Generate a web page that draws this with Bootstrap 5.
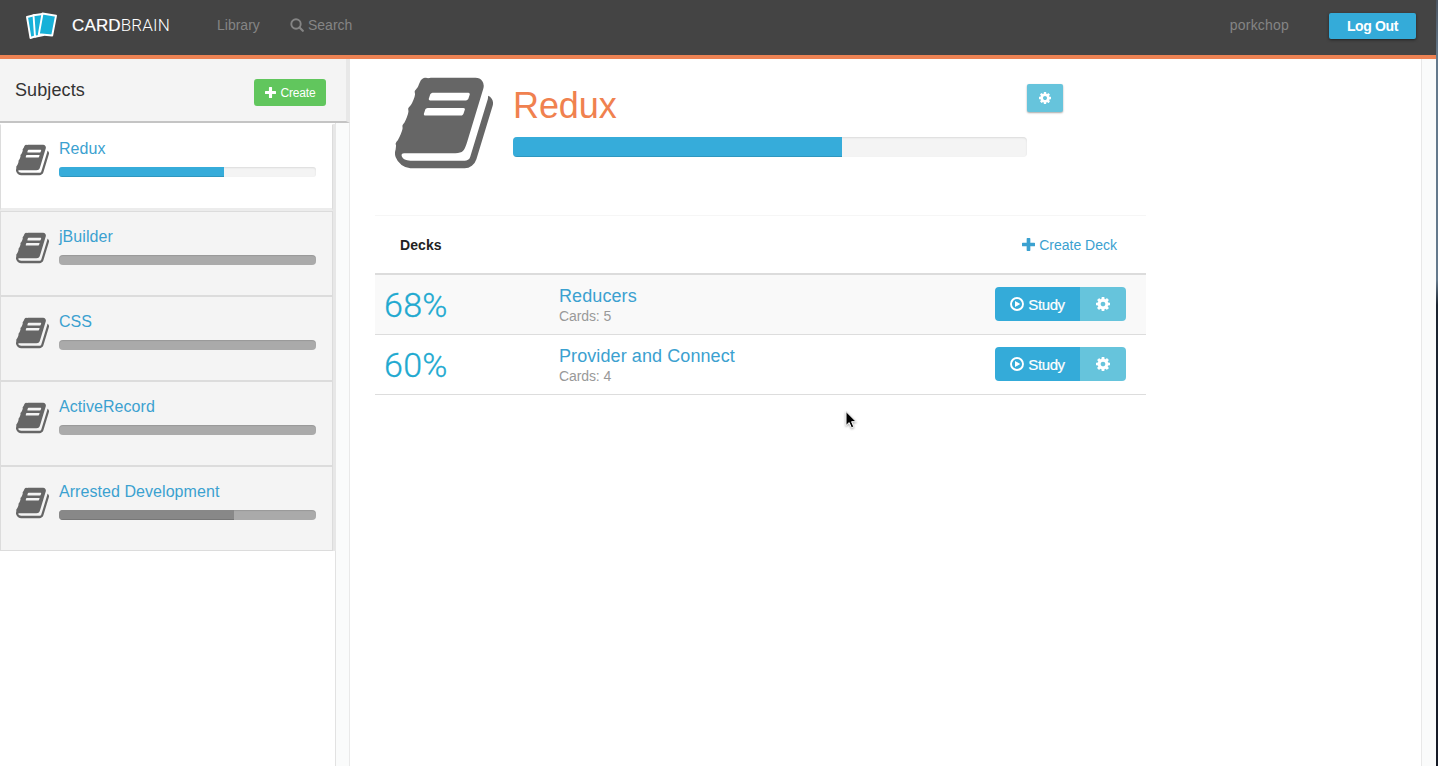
<!DOCTYPE html>
<html lang="en">
<head>
<meta charset="utf-8">
<title>CardBrain</title>
<link href="https://cdn.jsdelivr.net/npm/bootstrap@5.3.0/dist/css/bootstrap.min.css" rel="stylesheet">
<style>
  body { font-family: "Liberation Sans", Arial, sans-serif; font-size: 14px; line-height: 20px; color: #333; height: 100vh; overflow: hidden; background: #fff; }
  a { text-decoration: none; color: #3ba1d0; }
  svg { display: block; fill: currentColor; flex: none; }
  .desk-edge { width: 2px; background: linear-gradient(#4b5561 0, #64798c 60px, #64798c 280px, #1b2430 305px, #151a26 100%); }
  .topbar { height: 59px; background: #444; border-bottom: 4px solid #ed8253; padding: 0 20px 4px 25px; }
  .topbar a { color: #858585; }
  .topbar > a:not(.btn):not(.brand-name) { padding-bottom: 2px; }
  .brand-name { font-size: 17px; color: #fff !important; margin-left: 14px; width: 97px; white-space: nowrap; letter-spacing: .15px; -webkit-text-stroke: .2px #fff; }
  .brand-thin { font-family: Roboto, sans-serif; font-weight: 300; -webkit-text-stroke: 0; }
  .lnk-library { margin-left: 48px; width: 43px; }
  .lnk-search { margin-left: 30px; gap: 4px; }
  .btn-logout { width: 87px; height: 26px; margin-left: 40px; background: #34abd9; color: #fff !important; font-size: 14px; font-weight: 700; letter-spacing: -.35px; padding: 0; line-height: 27px; border: 0; border-radius: 2px; box-shadow: 0 1px 3px rgba(0,0,0,.5); }
  .sidebar { width: 350px; }
  .side-head { height: 64px; background: #f4f4f4; border-right: 4px solid #e8e8e8; border-bottom: 2px solid #c4c4c4; padding: 0 20px 0 15px; font-size: 18px; letter-spacing: .1px; }
  .btn-create { width: 72px; height: 27px; background: #61c65d; color: #fff !important; font-size: 12px; padding: 0 0 0 1px; border: 0; border-radius: 3px; gap: 4px; letter-spacing: -.15px; margin-top: 4px; }
  .btn-create span { padding-top: 2px; }
  .side-list { width: 336px; border-right: 1px solid #e2e2e2; padding-top: 1px; }
  .subject { height: 85px; width: 333px; border: 1px solid #dcdcdc; background: #f4f4f4; box-shadow: 3px 0 0 #e7e7e7; padding: 15px 16px 0 15px; color: #666; gap: 10px; }
  .subject.active { height: 87px; background: #fff; border-top-color: #fff; border-bottom: 3px solid #ececec; padding-top: 14px; }
  .subject a { font-size: 16px; letter-spacing: .06px; }
  .subject svg { margin-top: 3px; }
  .progress { background: #f4f4f4; height: 10px; border-radius: 3px; box-shadow: inset 0 1px 2px rgba(0,0,0,.1); }
  .progress-bar { background: #36acda; box-shadow: inset 0 -1px 0 rgba(0,0,0,.12); }
  .subject .progress { margin-top: 8px; }
  .subject:not(.active) .progress { background: #aaa; box-shadow: inset 0 1px 1px rgba(0,0,0,.1); border-radius: 4px; }
  .subject:not(.active) .progress-bar { background: #888; }
  .gutter { background: #fafbfb; }
  .g-left { border-right: 1px solid #e9e9e9; }
  .g-right { width: 15px; border-left: 1px solid #e8e8e8; }
  .main-pane { padding-left: 25px; }
  .deck-area { width: 771px; }
  .subject-head { height: 156px; padding: 11px 0 0 20px; color: #666; }
  .subject-head h1 { font-size: 36px; line-height: 40px; color: #f0814f; margin: 16px 0 11px; font-weight: 400; letter-spacing: -.1px; }
  .title-col { width: 514px; margin-left: 20px; }
  .title-col .progress { height: 20px; border-radius: 4px; }
  .btn-gear { background: #66c4dc; color: #fff; width: 36px; height: 28px; padding: 0 1px 0 0; border: 0; border-radius: 2px; margin-top: 14px; box-shadow: 0 1px 2px rgba(0,0,0,.35); }
  .deck-head { height: 60px; border-top: 1px solid #f6f6f6; border-bottom: 2px solid #dcdcdc; padding: 0 29px 0 25px; }
  .deck-head b { color: #222; letter-spacing: .1px; }
  .deck-row { height: 60px; border-bottom: 1px solid #ddd; padding: 0 20px 0 10px; }
  .deck-row.odd { background: #f9f9f9; }
  .pct { width: 174px; font: 300 34px/40px Roboto, sans-serif; color: #21a9d0; text-indent: -1px; letter-spacing: .3px; -webkit-text-stroke: .3px #21a9d0; }
  .deck-text { padding-top: 2px; }
  .deck-title { font-size: 18px; line-height: 20px; letter-spacing: .09px; }
  .count { color: #999; letter-spacing: -.1px; }
  .btn-group { margin-bottom: 1px; }
  .btn-study { width: 85px; height: 34px; background: #34abd9; color: #fff; font-size: 15px; padding: 0; border: 0; border-radius: 4px; gap: 4px; letter-spacing: -.4px; }
  .btn-study span { padding-top: 2px; -webkit-text-stroke: .2px #fff; }
  .btn-group > .btn-opts { width: 46px; height: 34px; background: #66c4dc; color: #fff; padding: 0; border: 0; border-radius: 4px; margin-left: 0 !important; }
  .pointer { position: absolute; left: 845px; top: 410px; filter: drop-shadow(0 1px 1px rgba(0,0,0,.35)); }
</style>
<script src="https://cdn.jsdelivr.net/npm/bootstrap@5.3.0/dist/js/bootstrap.bundle.min.js"></script>
</head>
<body class="d-flex">
<svg class="d-none">
  <symbol id="book" viewBox="0 0 1664 1792"><path d="M1639 478q40 57 18 129l-275 906q-19 64-76.5 107.5t-122.5 43.5h-923q-77 0-148.5-53.5t-99.5-131.5q-24-67-2-127 0-4 3-27t4-37q1-8-3-21.5t-3-19.5q2-11 8-21t16.5-23.5 16.5-23.5q23-38 45-91.5t30-91.5q3-10 .5-30t-.5-28q3-11 17-28t17-23q21-36 42-92t25-90q1-9-2.5-32t.5-28q4-13 22-30.5t22-22.5q19-26 42.5-84.5t27.5-96.5q1-8-3-25.5t-2-26.5q2-8 9-18t18-23 17-21q8-12 16.5-30.5t15-35 16-36 19.5-32 26.5-23.5 36-11.5 47.5 5.5l-1 3q38-9 51-9h761q74 0 114 56t18 130l-274 906q-36 119-71.5 153.5t-128.5 34.5h-869q-27 0-38 15-11 16-1 43 24 70 144 70h923q29 0 56-15.5t35-41.5l300-987q7-22 5-57 38 15 59 43zm-1064 2q-4 13 2 22.5t20 9.5h608q13 0 25.5-9.5t16.5-22.5l21-64q4-13-2-22.5t-20-9.5h-608q-13 0-25.5 9.5t-16.5 22.5zm-83 256q-4 13 2 22.5t20 9.5h608q13 0 25.5-9.5t16.5-22.5l21-64q4-13-2-22.5t-20-9.5h-608q-13 0-25.5 9.5t-16.5 22.5z"/></symbol>
  <symbol id="cog" viewBox="0 128 1536 1536"><path d="M1024 896q0-106-75-181t-181-75-181 75-75 181 75 181 181 75 181-75 75-181zm512-109v222q0 12-8 23t-20 13l-185 28q-19 54-39 91 35 50 107 138 10 12 10 25t-9 23q-27 37-99 108t-94 71q-12 0-26-9l-138-108q-44 23-91 38-16 136-29 186-7 28-36 28h-222q-14 0-24.5-8.5t-11.5-21.5l-28-184q-49-16-90-37l-141 107q-10 9-25 9-14 0-25-11-126-114-165-168-7-10-7-23 0-12 8-23 15-21 51-66.5t54-70.5q-27-50-41-99l-183-27q-13-2-21-12.5t-8-23.5v-222q0-12 8-23t19-13l186-28q14-46 39-92-40-57-107-138-10-12-10-24 0-10 9-23 26-36 98.5-107.5t94.5-71.5q13 0 26 10l138 107q44-23 91-38 16-136 29-186 7-28 36-28h222q14 0 24.5 8.5t11.5 21.5l28 184q49 16 90 37l142-107q9-9 24-9 13 0 25 10 129 119 165 170 7 8 7 22 0 12-8 23-15 21-51 66.5t-54 70.5q26 50 41 98l183 28q13 2 21 12.5t8 23.5z"/></symbol>
  <symbol id="plus" viewBox="0 0 12 12"><path d="M4.9 0h2.2q.6 0 .6.6v3.7h3.7q.6 0 .6.6v2.2q0 .6-.6.6H7.700v3.700q0 .6-.6.6H4.900q-.6 0-.6-.6V7.700H.6q-.6 0-.6-.6V4.900q0-.6.6-.6h3.700V.6q0-.6.6-.6z"/></symbol>
  <symbol id="play" viewBox="0 0 14 14"><circle cx="7" cy="7" r="6" fill="none" stroke="currentColor" stroke-width="1.900"/><path d="M5 3.900v6.200l5.300-3.100z"/></symbol>
</svg>
<div class="d-flex flex-column flex-grow-1">
  <header class="topbar d-flex align-items-center">
    <svg width="33" height="28" viewBox="0 0 33 28" fill="#17b1d8" stroke="#fff" stroke-width="1.900" stroke-linejoin="round" style="fill:#17b1d8">
      <path d="M2 5l8-2 4 20-8.500 3z"/><path d="M8.500 3.200l9-1.200 1 21-8.500 1.800z"/><path d="M17.500 1.500l13.500 2.200-3.800 19.800-13.400-1.200z"/>
    </svg>
    <a class="brand-name" href="#">CARD<span class="brand-thin">BRAIN</span></a>
    <a class="lnk-library" href="#">Library</a>
    <a class="lnk-search d-flex align-items-center" href="#"><svg width="14" height="14" viewBox="0 0 14 14"><circle cx="6" cy="6" r="4.700" fill="none" stroke="currentColor" stroke-width="1.900"/><path d="M9.500 9.500l3.300 3.300" stroke="currentColor" stroke-width="2.200" stroke-linecap="round"/></svg>Search</a>
    <a class="ms-auto" style="letter-spacing:.2px" href="#">porkchop</a>
    <a class="btn btn-logout" href="#">Log Out</a>
  </header>
  <div class="d-flex flex-grow-1">
    <aside class="sidebar d-flex flex-column">
      <div class="side-head d-flex align-items-center justify-content-between"><span>Subjects</span>
        <a class="btn btn-create d-flex align-items-center justify-content-center" href="#"><svg width="11" height="11"><use href="#plus"/></svg><span>Create</span></a></div>
      <div class="d-flex flex-grow-1">
        <div class="side-list">
          <div class="subject active d-flex"><svg width="33" height="36"><use href="#book"/></svg><div class="flex-grow-1"><a href="#">Redux</a><div class="progress"><div class="progress-bar" style="width:64.2%"></div></div></div></div>
          <div class="subject d-flex"><svg width="33" height="36"><use href="#book"/></svg><div class="flex-grow-1"><a href="#">jBuilder</a><div class="progress"></div></div></div>
          <div class="subject d-flex"><svg width="33" height="36"><use href="#book"/></svg><div class="flex-grow-1"><a href="#">CSS</a><div class="progress"></div></div></div>
          <div class="subject d-flex"><svg width="33" height="36"><use href="#book"/></svg><div class="flex-grow-1"><a href="#">ActiveRecord</a><div class="progress"></div></div></div>
          <div class="subject d-flex"><svg width="33" height="36"><use href="#book"/></svg><div class="flex-grow-1"><a href="#">Arrested Development</a><div class="progress"><div class="progress-bar" style="width:68%"></div></div></div></div>
        </div>
        <div class="gutter g-left flex-grow-1"></div>
      </div>
    </aside>
    <main class="main-pane flex-grow-1">
      <div class="deck-area">
        <div class="subject-head d-flex align-items-start">
          <svg width="98" height="106"><use href="#book"/></svg>
          <div class="title-col"><h1>Redux</h1><div class="progress"><div class="progress-bar" style="width:64%"></div></div></div>
          <button class="btn btn-gear d-flex align-items-center justify-content-center"><svg width="12" height="12"><use href="#cog"/></svg></button>
        </div>
        <div class="deck-head d-flex align-items-center justify-content-between"><b>Decks</b><a class="d-flex align-items-center gap-1" href="#"><svg width="13" height="13"><use href="#plus"/></svg>Create Deck</a></div>
        <div class="deck-row odd d-flex align-items-center"><div class="pct">68%</div><div class="deck-text flex-grow-1"><a class="deck-title d-block" href="#">Reducers</a><div class="count">Cards: 5</div></div>
          <div class="btn-group"><button class="btn btn-study d-flex align-items-center justify-content-center"><svg width="14" height="14"><use href="#play"/></svg><span>Study</span></button><button class="btn btn-opts d-flex align-items-center justify-content-center"><svg width="14" height="14"><use href="#cog"/></svg></button></div></div>
        <div class="deck-row d-flex align-items-center"><div class="pct">60%</div><div class="deck-text flex-grow-1"><a class="deck-title d-block" href="#">Provider and Connect</a><div class="count">Cards: 4</div></div>
          <div class="btn-group"><button class="btn btn-study d-flex align-items-center justify-content-center"><svg width="14" height="14"><use href="#play"/></svg><span>Study</span></button><button class="btn btn-opts d-flex align-items-center justify-content-center"><svg width="14" height="14"><use href="#cog"/></svg></button></div></div>
      </div>
    </main>
    <div class="gutter g-right"></div>
  </div>
</div>
<div class="desk-edge"></div>
<svg class="pointer" width="13" height="20" viewBox="0 0 13 20"><path d="M1 1.500v14l3.200-2.900 2.200 5.200 2.400-1-2.200-5.100h4.600z" fill="#000" stroke="#fff" stroke-width="1"/></svg>
</body>
</html>
